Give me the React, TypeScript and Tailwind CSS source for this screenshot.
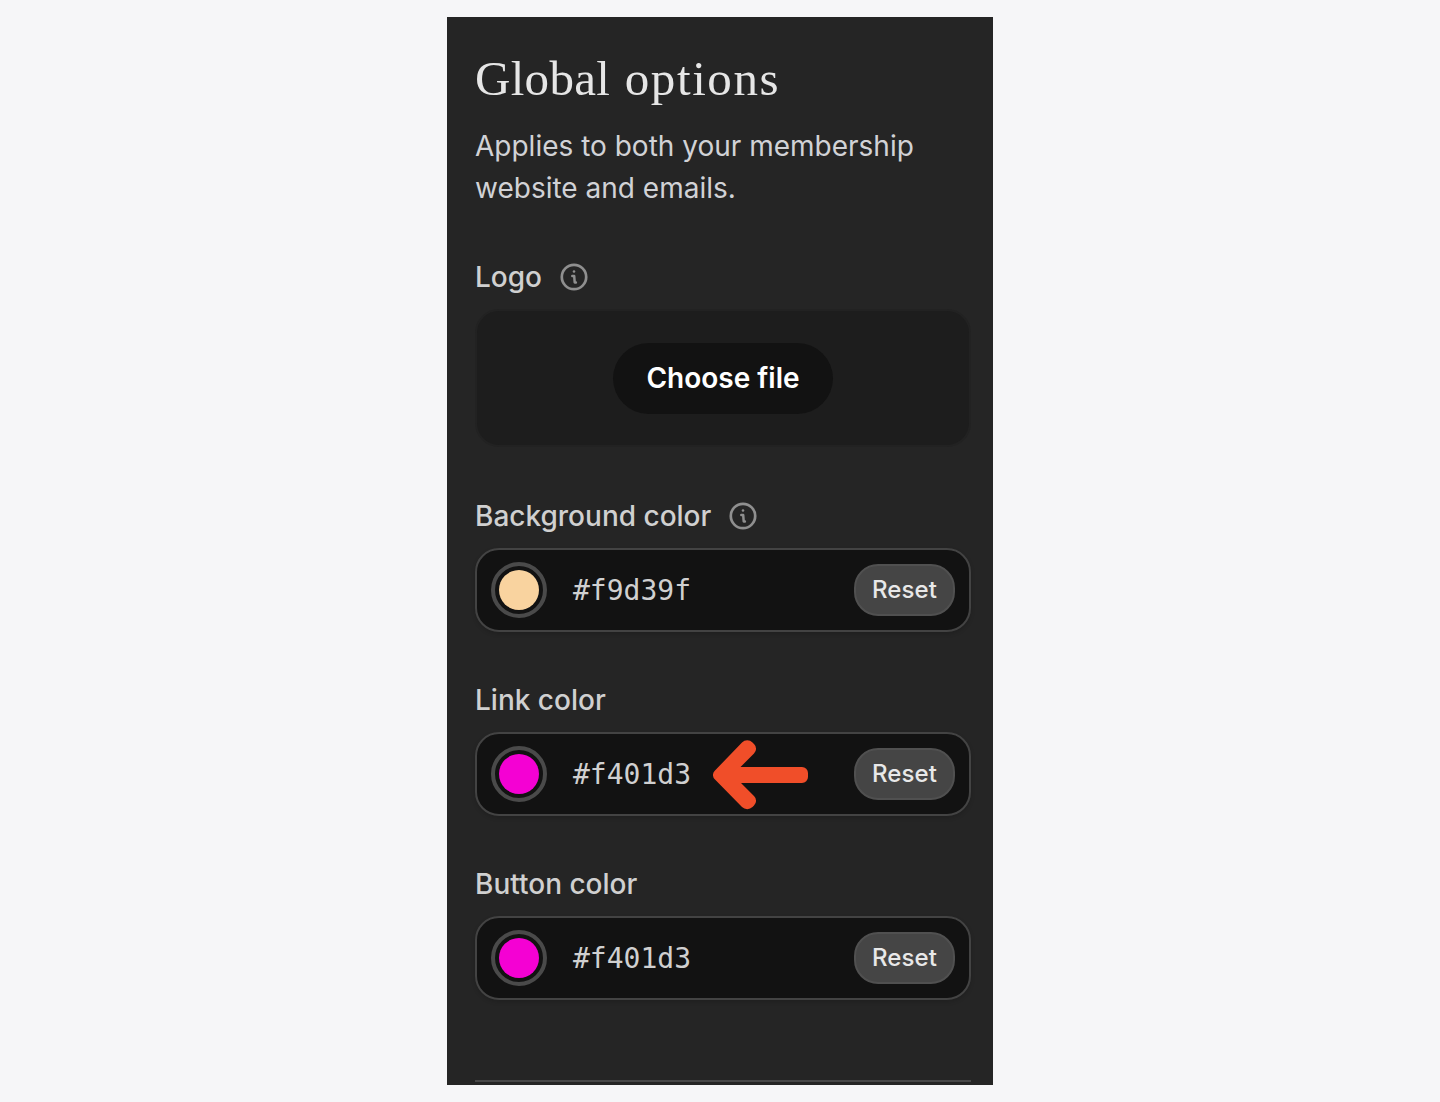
import React from "react";

interface ColorOption {
  label: string;
  value: string;
  hasInfo?: boolean;
  hasPointer?: boolean;
}

const COLOR_OPTIONS: ColorOption[] = [
  { label: "Background color", value: "#f9d39f", hasInfo: true },
  { label: "Link color", value: "#f401d3", hasPointer: true },
  { label: "Button color", value: "#f401d3" },
];

function InfoIcon() {
  return (
    <svg viewBox="0 0 28 28" className="h-7 w-7 shrink-0" fill="none" stroke="#8f8f8f">
      <circle cx="14" cy="14" r="12.2" strokeWidth="2.7" />
      <circle cx="14" cy="8.500" r="1.300" fill="#8f8f8f" stroke="none" />
      <path d="M12.300 13h1.900l.5 6.500h1.200" strokeWidth="2.500" strokeLinecap="round" strokeLinejoin="round" />
    </svg>
  );
}

function PointerArrow() {
  return (
    <svg viewBox="0 0 96 70" className="absolute left-[236px] top-[6px] h-[70px] w-24" fill="#f04e29">
      <path d="M29 2.500a7.500 7.500 0 0 1 10.500 0l1.500 1.500a6.500 6.500 0 0 1 0 9.500L27.500 27H89a6 6 0 0 1 6 6v4a6 6 0 0 1-6 6H28l13 13a6.500 6.500 0 0 1 0 9.500L39.500 67a7.500 7.500 0 0 1-10.500 0L2 39.500a6 6 0 0 1 0-9Z" />
    </svg>
  );
}

function FieldLabel({ text, hasInfo }: { text: string; hasInfo?: boolean }) {
  return (
    <div className="mb-[11px] flex h-[42px] items-center gap-[18px]">
      <span className="text-[28px] leading-[42px] font-medium text-[#d0d0d0]">{text}</span>
      {hasInfo && <InfoIcon />}
    </div>
  );
}

function ColorField({ label, value, hasInfo, hasPointer }: ColorOption) {
  return (
    <div>
      <FieldLabel text={label} hasInfo={hasInfo} />
      <div className="relative flex h-[84px] items-center rounded-[24px] border-2 border-[#434343] bg-[#121212] px-[14px] shadow-[0_2px_4px_rgba(0,0,0,0.15)]">
        {/* Swatch */}
        <div className="flex h-14 w-14 items-center justify-center rounded-full border-4 border-[#4a4a4a]">
          <div className="h-10 w-10 rounded-full" style={{ backgroundColor: value }} />
        </div>
        <span className="ml-[26px] flex-1 pt-0.5 font-['DejaVu_Sans_Mono',monospace] text-[28px] leading-[42px] text-[#d0d0d0]">
          {value}
        </span>
        <button className="h-[52px] w-[101px] rounded-[24px] border-2 border-[#505050] bg-[#454545] text-[24px] leading-none font-medium tracking-[0.1px] text-[#e8e8e8]">
          Reset
        </button>
        {hasPointer && <PointerArrow />}
      </div>
    </div>
  );
}

export default function App() {
  return (
    <main className="flex h-[1102px] justify-center overflow-hidden bg-[#f6f6f8] py-[17px] font-['Inter',sans-serif]">
      <section className="h-[1068px] w-[546px] bg-[#252525] pt-[31px] pr-[22px] pl-7">
        <h1 className="h-[77px] font-['Liberation_Serif',serif] text-[49px] leading-[62px] tracking-[0.3px] whitespace-nowrap text-[#e6e6e6]">
          Global <span className="ml-0.5 tracking-[1.6px]">options</span>
        </h1>
        <p className="text-[28px] leading-[42px] text-[#d1d2d6]">
          Applies to both your membership
          <br />
          website and emails.
        </p>

        {/* Logo upload */}
        <div className="mt-[47px] mb-12">
          <FieldLabel text="Logo" hasInfo />
          <div className="flex h-[138px] items-center justify-center rounded-[24px] border-2 border-[#222222] bg-[#1d1d1d]">
            <button className="h-[71px] w-[220px] rounded-full bg-[#121212] text-[28px] leading-none font-semibold text-white">
              Choose file
            </button>
          </div>
        </div>

        {/* Colors */}
        <div className="space-y-[47px]">
          {COLOR_OPTIONS.map((option) => (
            <ColorField key={option.label} {...option} />
          ))}
        </div>

        <hr className="mt-20 border-t-2 border-[#484848]" />
      </section>
    </main>
  );
}
